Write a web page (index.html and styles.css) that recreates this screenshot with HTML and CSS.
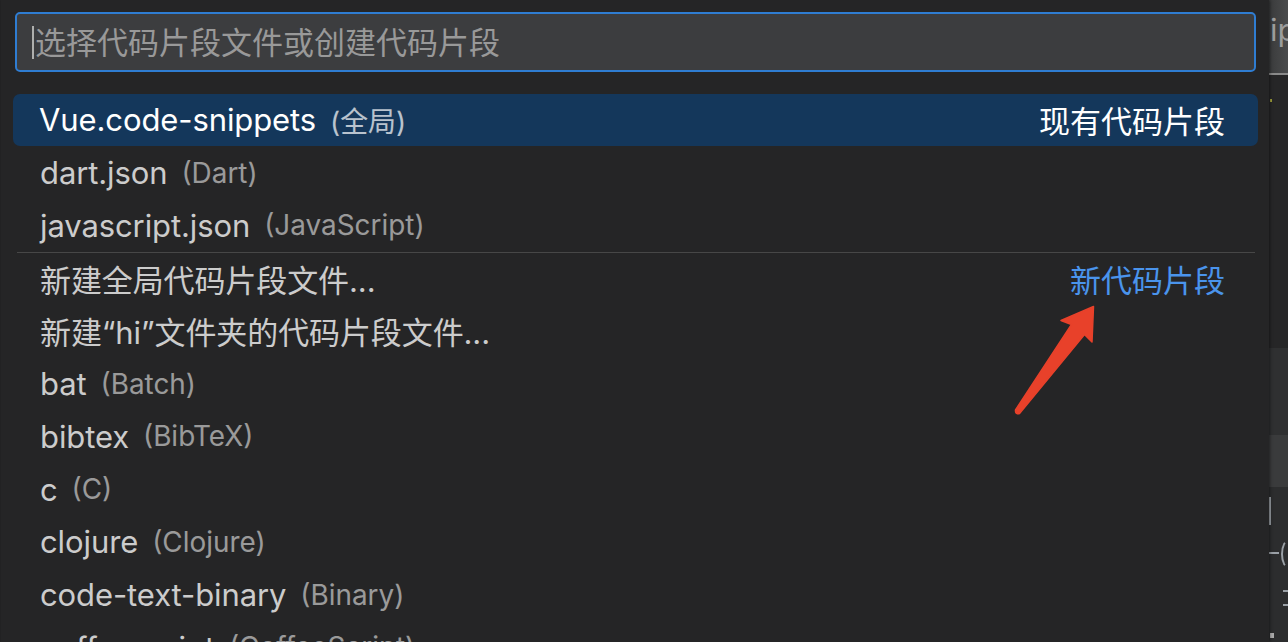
FILE: index.html
```html
<!DOCTYPE html>
<html lang="zh-CN">
<head>
<meta charset="utf-8">
<title>选择代码片段文件</title>
<link rel="stylesheet" href="styles.css">
</head>
<body>
<div class="screen">
  <div class="panel">
    <div class="input-box">
      <span class="caret"></span>
      <span class="placeholder">选择代码片段文件或创建代码片段</span>
    </div>
    <div class="list">
      <div class="row selected">
        <span class="label">Vue.code-snippets</span><span class="desc">(全局)</span>
        <span class="meta">现有代码片段</span>
      </div>
      <div class="row"><span class="label">dart.json</span><span class="desc">(Dart)</span></div>
      <div class="row"><span class="label">javascript.json</span><span class="desc">(JavaScript)</span></div>
      <div class="row sep">
        <span class="label">新建全局代码片段文件...</span>
        <span class="meta link">新代码片段</span>
      </div>
      <div class="row"><span class="label">新建“hi”文件夹的代码片段文件...</span></div>
      <div class="row"><span class="label">bat</span><span class="desc">(Batch)</span></div>
      <div class="row"><span class="label">bibtex</span><span class="desc">(BibTeX)</span></div>
      <div class="row"><span class="label">c</span><span class="desc">(C)</span></div>
      <div class="row"><span class="label">clojure</span><span class="desc">(Clojure)</span></div>
      <div class="row"><span class="label">code-text-binary</span><span class="desc">(Binary)</span></div>
      <div class="row"><span class="label">coffeescript</span><span class="desc">(CoffeeScript)</span></div>
    </div>
  </div>
  <div class="editor-strip">
    <div class="tab"><span class="tab-text">ip</span></div>
    <div class="band band-a"><span class="dot"></span></div>
    <div class="band band-b"></div>
    <div class="band band-c"></div>
    <div class="band band-d">
      <span class="brk"></span>
      <span class="bar b1"></span>
      <span class="paren"></span>
      <span class="bar b3"></span>
      <span class="bar b4"></span>
      <span class="mini"></span>
    </div>
  </div>
</div>
<svg class="arrow" width="1288" height="642" viewBox="0 0 1288 642" aria-hidden="true">
  <path d="M1093.5 306.5 L1061 320.5 L1071.5 324.5 L1015.5 410 Q1015 414.5 1019.5 413.5 L1084.5 334.5 L1092 342 Z" fill="#e8412a" stroke="#e8412a" stroke-width="1.5" stroke-linejoin="round"/>
</svg>
</body>
</html>
```

FILE: styles.css
```css
html, body {
  margin: 0;
  padding: 0;
}

body {
  width: 1288px;
  height: 642px;
  overflow: hidden;
  background: #252526;
  font-family: Inter, "Noto Sans CJK SC", sans-serif;
  position: relative;
}

.screen {
  display: flex;
  height: 642px;
}

.panel {
  width: 1268px;
  margin-left: 1px;
  background: #252526;
  padding-top: 12px;
  box-sizing: border-box;
  overflow: hidden;
  box-shadow: 1px 0 3px rgba(0, 0, 0, 0.45);
  position: relative;
  z-index: 1;
}

.input-box {
  margin: 0 13px 0 14px;
  height: 60px;
  box-sizing: border-box;
  border: 2px solid #2f7dd2;
  border-radius: 5px;
  background: #3c3d3f;
  display: flex;
  align-items: center;
  padding-left: 15px;
}

.caret {
  width: 2px;
  height: 33px;
  background: #aeafad;
  margin-right: 1px;
}

.placeholder {
  font-size: 31px;
  color: #999999;
  font-family: Inter, "Noto Sans CJK SC", sans-serif;
  line-height: 1;
}

.list {
  margin: 21.6px 11px 0 12px;
  display: flex;
  flex-direction: column;
}

.row {
  height: 52.75px;
  flex: 0 0 52.75px;
  display: flex;
  align-items: center;
  padding: 0 33px 0 27px;
  box-sizing: border-box;
  font-size: 31px;
  color: #cccccc;
  white-space: nowrap;
  border-radius: 7px;
}

.row.selected {
  background: #14375b;
  color: #ffffff;
  padding-left: 26px;
}

.row.sep {
  border-top: 1px solid #474747;
  border-radius: 0;
  margin: 0 3px 0 4px;
  padding-left: 23px;
  padding-right: 30px;
}

.label {
  letter-spacing: -0.1px;
}

.desc {
  font-size: 0.9em;
  margin-left: 0.5em;
  opacity: 0.7;
}

.meta {
  margin-left: auto;
}

.meta.link {
  color: #4a94ec;
}

.editor-strip {
  flex: 1;
  display: flex;
  flex-direction: column;
  background: #262627;
  overflow: hidden;
}

.tab {
  height: 75px;
  flex: 0 0 75px;
  background: linear-gradient(90deg, #3a3b3c, #4a4b4c);
  border-bottom: 2px solid #8a8a8a;
  box-sizing: border-box;
  overflow: hidden;
}

.tab-text {
  display: block;
  font-family: Inter, sans-serif;
  font-size: 31px;
  color: #9c9c9c;
  margin: 14px 0 0 1px;
  line-height: 1;
}

.band {
  position: relative;
  overflow: hidden;
}

.band-a {
  height: 273px;
  flex: 0 0 273px;
  background: #262627;
}

.dot {
  position: absolute;
  left: 1px;
  top: 24px;
  width: 2px;
  height: 3px;
  background: #9a9a3a;
}

.band-b {
  height: 87px;
  flex: 0 0 87px;
  background: #2f3031;
}

.band-c {
  height: 52px;
  flex: 0 0 52px;
  background: #3a3b3c;
}

.band-d {
  flex: 1;
  background: #2c2d2e;
}

.brk {
  position: absolute;
  left: -4px;
  top: 10px;
  width: 4px;
  height: 24px;
  border: 2px solid #9aa0a6;
  border-left: none;
}

.paren {
  position: absolute;
  left: 12px;
  top: 52px;
  width: 14px;
  height: 26px;
  border: 2px solid #9aa0a6;
  border-right: none;
  border-top-color: transparent;
  border-bottom-color: transparent;
  border-radius: 50%;
}

.bar {
  position: absolute;
  height: 2px;
  background: #9aa0a6;
}

.b1 { left: 0; top: 65px; width: 10px; }
.b3 { left: 14px; top: 103px; width: 6px; }
.b4 { left: 14px; top: 117px; width: 6px; }

.mini {
  position: absolute;
  left: 1px;
  top: 146px;
  width: 4px;
  height: 5px;
  background: #aaaaaa;
}

.arrow {
  position: absolute;
  left: 0;
  top: 0;
  pointer-events: none;
  z-index: 5;
}
```
